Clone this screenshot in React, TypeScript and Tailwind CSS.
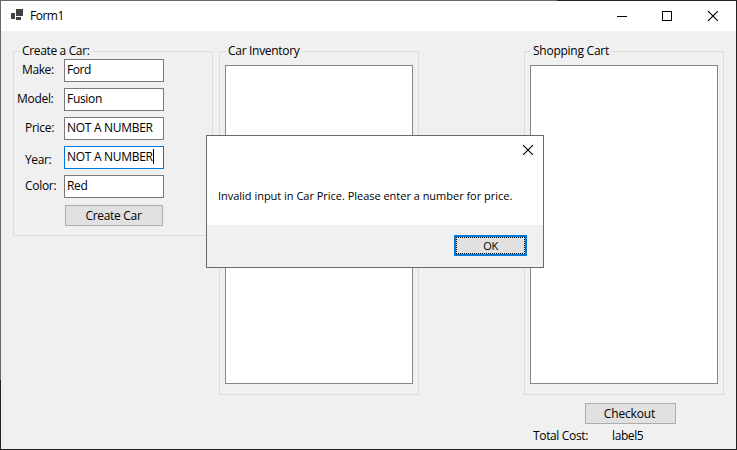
import type { ReactNode } from "react";

type FieldProps = {
  label: string;
  value: string;
  labelClass: string;
  valueClass: string;
  focused?: boolean;
};

function Field({ label, value, labelClass, valueClass, focused = false }: FieldProps) {
  return (
    <div className="flex h-[23px] items-start">
      <div className={`w-[50px] shrink-0 leading-[22px] ${labelClass}`}>{label}</div>
      <div
        className={`flex h-[23px] w-[100px] items-start border bg-white pl-[2px] leading-[20px] ${
          focused ? "border-[#0078d7]" : "border-[#7a7a7a]"
        }`}
      >
        <span className={valueClass}>{value}</span>
        {focused && <span className="mt-[2px] h-[15px] w-px bg-black" />}
      </div>
    </div>
  );
}

function GroupBox({ title, titleClass, className, children }: { title: string; titleClass: string; className: string; children?: ReactNode }) {
  return (
    <section className={`w-[200px] shrink-0 border border-[#dcdcdc] ${className}`}>
      <h2 className={`-mt-[9px] ml-[6px] h-[16px] w-fit bg-[#f0f0f0] px-[2px] leading-[16px] ${titleClass}`}>{title}</h2>
      {children}
    </section>
  );
}

function ListBox() {
  return <div className="mt-[6px] ml-[5px] h-[319px] w-[188px] border border-[#828790] bg-white" />;
}

function CloseIcon() {
  return (
    <svg width="10" height="10" viewBox="0 0 10 10" fill="none" stroke="#000" strokeWidth="1.1">
      <path d="M0 0L10 10M10 0L0 10" />
    </svg>
  );
}

function MessageBox() {
  return (
    <div role="dialog" className="absolute top-[135px] left-[206px] flex h-[133px] w-[338px] flex-col border border-[#6b6b6b] bg-white">
      <div className="flex h-[89px] flex-col">
        <div className="flex justify-end pt-[9px] pr-[10px]">
          <CloseIcon />
        </div>
        <p className="mt-[33px] ml-[11px] text-[11px] leading-[16px] tracking-[-0.02px] whitespace-nowrap">
          Invalid input in Car Price. Please enter a number for price.
        </p>
      </div>
      <div className="flex flex-1 items-start justify-end bg-[#f0f0f0] pt-[10px] pr-[16px]">
        <button className="h-[21px] w-[73px] border-2 border-[#0078d7] bg-[#e1e1e1]">
          <span className="flex h-full items-center justify-center border border-dotted border-black text-[11px] leading-[14px] tracking-[-0.3px]">OK</span>
        </button>
      </div>
    </div>
  );
}

export default function App() {
  return (
    <div className="relative flex h-[450px] w-[737px] flex-col overflow-hidden bg-[#f0f0f0] font-['Open_Sans','Noto_Sans',sans-serif] text-[12px] text-black">
      <div className="flex h-px shrink-0">
        <div className="w-[557px] bg-[#6b676a]" />
        <div className="flex-1 bg-[#222]" />
      </div>
      <div className="flex flex-1">
        <div className="flex w-px shrink-0 flex-col">
          <div className="h-[379px] bg-[#6b676a]" />
          <div className="flex-1 bg-[#222]" />
        </div>
        <div className="flex w-[735px] flex-col">
          <header className="flex h-[30px] items-center bg-white">
            <svg className="-mt-[3px] ml-[10px] shrink-0" width="12" height="11" viewBox="0 0 12 11" fill="#414141" shapeRendering="crispEdges">
              <path d="M5 0h7v7H5zM0 4h4v6H0zM5 8h5v3H5z" />
            </svg>
            <h1 className="ml-[7px] flex-1 tracking-[-0.5px]">Form1</h1>
            <svg className="mt-[-1px]" width="101" height="10" viewBox="0 0 101 10" fill="none" stroke="#000">
              <path d="M0 5.5h10M45.5 .5h9v9h-9z" shapeRendering="crispEdges" />
              <path d="M91 0l10 10M101 0L91 10" strokeWidth="1.1" />
            </svg>
            <div className="w-[18px]" />
          </header>
          <main className="flex pt-[20px] pl-[12px]">
            <GroupBox title="Create a Car:" titleClass="tracking-[-0.35px]" className="h-[185px]">
              <div className="flex flex-col gap-[6px]">
                <Field label="Make:" value="Ford" labelClass="pl-[8px] tracking-[-0.4px]" valueClass="tracking-[-0.4px]" />
                <Field label="Model:" value="Fusion" labelClass="pl-[3px] tracking-[-0.3px]" valueClass="tracking-[-0.3px]" />
                <Field label="Price:" value="NOT A NUMBER" labelClass="pl-[11px] tracking-[-0.3px]" valueClass="tracking-[-0.3px]" />
                <Field label="Year:" value="NOT A NUMBER" labelClass="pl-[11px] pt-[3px] tracking-[-0.4px]" valueClass="tracking-[-0.3px]" focused />
                <Field label="Color:" value="Red" labelClass="pl-[11px] tracking-[-0.3px]" valueClass="tracking-[-0.3px]" />
              </div>
              <button className="mt-[7px] ml-[51px] flex h-[21px] w-[98px] items-center justify-center border border-[#adadad] bg-[#e1e1e1] pr-px tracking-[-0.3px]">
                Create Car
              </button>
            </GroupBox>
            <GroupBox title="Car Inventory" titleClass="tracking-[-0.3px]" className="ml-[6px] h-[344px]">
              <ListBox />
            </GroupBox>
            <div className="ml-[105px] w-[200px]">
              <GroupBox title="Shopping Cart" titleClass="tracking-[-0.25px]" className="h-[344px]">
                <ListBox />
              </GroupBox>
              <button className="mt-[8px] ml-[61px] flex h-[21px] w-[91px] items-center justify-center border border-[#adadad] bg-[#e1e1e1] pr-[2px] tracking-[-0.15px]">
                Checkout
              </button>
              <div className="mt-[4px] flex pl-[9px] leading-[16px]">
                <span className="w-[79px] tracking-[-0.35px]">Total Cost:</span>
                <span className="tracking-[-0.4px]">label5</span>
              </div>
            </div>
          </main>
        </div>
        <div className="w-px bg-[#222]" />
      </div>
      <div className="h-px shrink-0 bg-[#222]" />
      <MessageBox />
    </div>
  );
}
